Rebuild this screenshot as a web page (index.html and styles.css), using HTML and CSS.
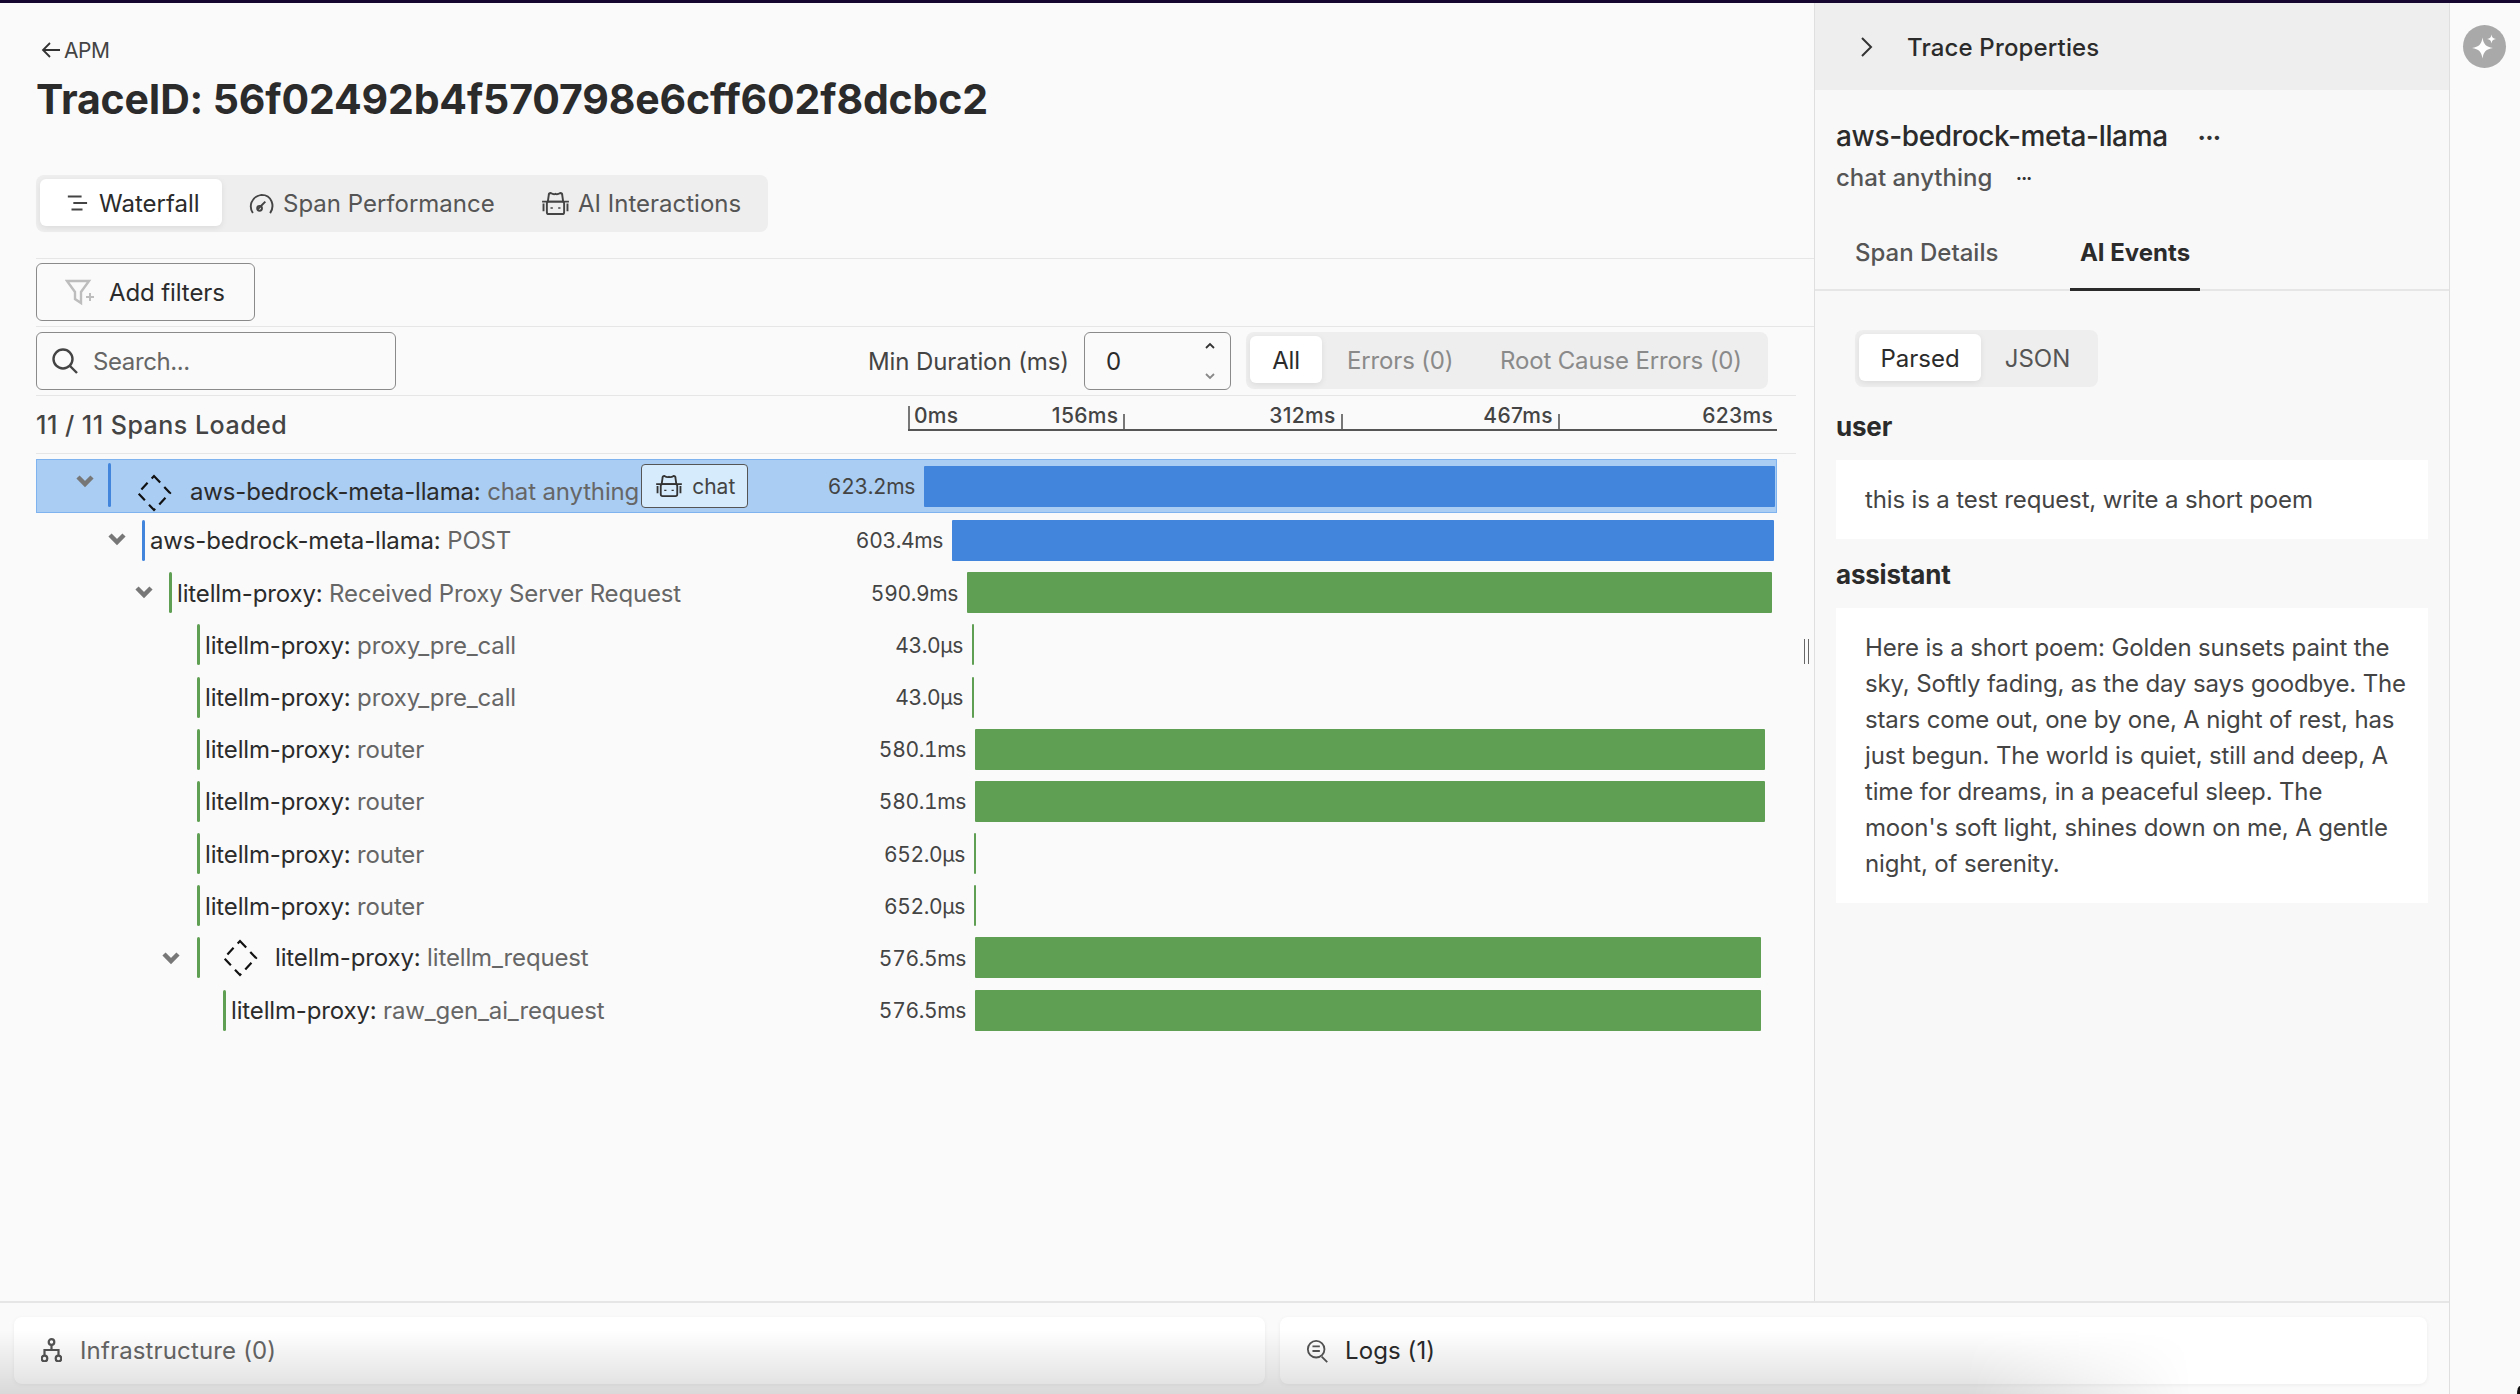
FILE: index.html
```html
<!DOCTYPE html>
<html lang="en">
<head>
<meta charset="utf-8">
<title>Trace</title>
<link rel="stylesheet" href="styles.css">
</head>
<body>
<div class="topbar"></div>
<div class="app">
  <div class="workspace">
    <div class="columns">
      <main class="main">
        <a class="crumb"><svg class="ic-back" viewBox="0 0 22 20"><path d="M20 10H3M10 3l-7 7 7 7"/></svg>APM</a>
        <h1 class="title">TraceID: 56f02492b4f570798e6cff602f8dcbc2</h1>
        <div class="seg seg-main">
          <div class="seg-item on"><svg class="ic" viewBox="0 0 24 24"><path d="M2 5h15M8 12h15M6 19h12"/></svg>Waterfall</div>
          <div class="seg-item"><svg class="ic" viewBox="0 0 28 24"><path d="M5 22C1 16 2 5 14 3c11 0 14 12 9 19M10 18l8-8"/><circle cx="12" cy="17" r="2.5"/></svg>Span Performance</div>
          <div class="seg-item"><svg class="ic" viewBox="0 0 30 24"><path d="M7 10l1-7q0-2 2-2 3 2 5 1 2 1 5-1 2 0 2 2l1 7M1 10h28"/><rect x="6" y="10" width="18" height="13" rx="2"/><path d="M2.500 12v8M27.500 12v8"/><path class="eye" d="M11 16v1.500M19 16v1.500"/></svg>AI Interactions</div>
        </div>
        <div class="bar-row">
          <button class="btn"><svg class="ic-filter" viewBox="0 0 30 28"><path d="M2 3h22l-8 11v11l-6-4v-7z"/><path class="plus" d="M25 15v8M21 19h8"/></svg>Add filters</button>
        </div>
        <div class="bar-row bar-search">
          <div class="search"><svg class="ic-search" viewBox="0 0 28 28"><circle cx="12" cy="12" r="9.5"/><path d="M19 19l7 7"/></svg>Search...</div>
          <span class="dur-label">Min Duration (ms)</span>
          <div class="num"><span>0</span><svg class="ic-spin" viewBox="0 0 12 40"><path class="up" d="M2 7l4-4 4 4"/><path class="down" d="M2 33l4 4 4-4"/></svg></div>
          <div class="seg seg-filter">
            <div class="seg-item on">All</div>
            <div class="seg-item">Errors (0)</div>
            <div class="seg-item">Root Cause Errors (0)</div>
          </div>
        </div>
        <div class="loaded-row">
          <span class="loaded">11 / 11 Spans Loaded</span>
          <div class="axis">
            <div class="tick first"><span class="zero">0ms</span><span>156ms</span></div>
            <div class="tick"><span>312ms</span></div>
            <div class="tick"><span>467ms</span></div>
            <div class="tick last"><span>623ms</span></div>
          </div>
        </div>
        <div class="rows">
          <div class="row selected">
            <svg class="chev" viewBox="0 0 18 12"><path d="M2 2l7 7 7-7"/></svg>
            <i class="edge blue e1"></i>
            <svg class="diamond" viewBox="0 0 36 38"><path d="M18 2L34 19 18 36 2 19z"/></svg>
            <span class="name name-root"><b>aws-bedrock-meta-llama:</b> chat anything</span>
            <span class="chip"><svg class="ic-chip" viewBox="0 0 30 24"><path d="M7 10l1-7q0-2 2-2 3 2 5 1 2 1 5-1 2 0 2 2l1 7M1 10h28"/><rect x="6" y="10" width="18" height="13" rx="2"/><path d="M2.500 12v8M27.500 12v8"/><path class="eye" d="M11 16v1.500M19 16v1.500"/></svg>chat</span>
            <span class="dur">623.2ms</span><i class="span-bar blue" style="width:851px;margin-right:1px"></i>
          </div>
          <div class="row d1">
            <svg class="chev" viewBox="0 0 18 12"><path d="M2 2l7 7 7-7"/></svg>
            <i class="edge blue"></i>
            <span class="name"><b>aws-bedrock-meta-llama:</b> POST</span>
            <span class="dur">603.4ms</span><i class="span-bar blue" style="width:822px;margin-right:3px"></i>
          </div>
          <div class="row d2">
            <svg class="chev" viewBox="0 0 18 12"><path d="M2 2l7 7 7-7"/></svg>
            <i class="edge green"></i>
            <span class="name"><b>litellm-proxy:</b> Received Proxy Server Request</span>
            <span class="dur">590.9ms</span><i class="span-bar green" style="width:805px;margin-right:5px"></i>
          </div>
          <div class="row d3">
            <i class="edge green"></i>
            <span class="name"><b>litellm-proxy:</b> proxy_pre_call</span>
            <span class="dur">43.0µs</span><i class="span-bar green" style="width:2px;margin-right:803px"></i>
          </div>
          <div class="row d3">
            <i class="edge green"></i>
            <span class="name"><b>litellm-proxy:</b> proxy_pre_call</span>
            <span class="dur">43.0µs</span><i class="span-bar green" style="width:2px;margin-right:803px"></i>
          </div>
          <div class="row d3">
            <i class="edge green"></i>
            <span class="name"><b>litellm-proxy:</b> router</span>
            <span class="dur">580.1ms</span><i class="span-bar green" style="width:790px;margin-right:12px"></i>
          </div>
          <div class="row d3">
            <i class="edge green"></i>
            <span class="name"><b>litellm-proxy:</b> router</span>
            <span class="dur">580.1ms</span><i class="span-bar green" style="width:790px;margin-right:12px"></i>
          </div>
          <div class="row d3">
            <i class="edge green"></i>
            <span class="name"><b>litellm-proxy:</b> router</span>
            <span class="dur">652.0µs</span><i class="span-bar green" style="width:2px;margin-right:801px"></i>
          </div>
          <div class="row d3">
            <i class="edge green"></i>
            <span class="name"><b>litellm-proxy:</b> router</span>
            <span class="dur">652.0µs</span><i class="span-bar green" style="width:2px;margin-right:801px"></i>
          </div>
          <div class="row d3 has-chev">
            <svg class="chev" viewBox="0 0 18 12"><path d="M2 2l7 7 7-7"/></svg>
            <i class="edge green"></i>
            <svg class="diamond small" viewBox="0 0 36 38"><path d="M18 2L34 19 18 36 2 19z"/></svg>
            <span class="name"><b>litellm-proxy:</b> litellm_request</span>
            <span class="dur">576.5ms</span><i class="span-bar green" style="width:786px;margin-right:16px"></i>
          </div>
          <div class="row d4">
            <i class="edge green"></i>
            <span class="name"><b>litellm-proxy:</b> raw_gen_ai_request</span>
            <span class="dur">576.5ms</span><i class="span-bar green" style="width:786px;margin-right:16px"></i>
          </div>
          <div class="grip"></div>
        </div>
      </main>
      <aside class="panel">
        <div class="panel-head"><svg class="ic-next" viewBox="0 0 14 22"><path d="M3 2l9 9-9 9"/></svg>Trace Properties</div>
        <div class="panel-title"><h2>aws-bedrock-meta-llama</h2><span class="dots">•••</span></div>
        <div class="panel-sub"><span>chat anything</span><span class="dots small">•••</span></div>
        <div class="panel-tabs">
          <div class="ptab">Span Details</div>
          <div class="ptab on">AI Events</div>
        </div>
        <div class="panel-body">
          <div class="seg seg-parse">
            <div class="seg-item on">Parsed</div>
            <div class="seg-item">JSON</div>
          </div>
          <h3>user</h3>
          <p class="msg">this is a test request, write a short poem</p>
          <h3>assistant</h3>
          <p class="msg">Here is a short poem: Golden sunsets paint the sky, Softly fading, as the day says goodbye. The stars come out, one by one, A night of rest, has just begun. The world is quiet, still and deep, A time for dreams, in a peaceful sleep. The moon's soft light, shines down on me, A gentle night, of serenity.</p>
        </div>
      </aside>
    </div>
    <footer class="dock">
      <div class="dock-card wide muted"><svg class="ic-dock infra" viewBox="0 0 21 24"><circle cx="10.500" cy="4" r="2.800"/><circle cx="3.500" cy="20.500" r="2.800"/><circle cx="17.500" cy="20.500" r="2.800"/><path d="M10.500 7v5M3.500 18v-6h14v6"/></svg>Infrastructure (0)</div>
      <div class="dock-card"><svg class="ic-dock" viewBox="0 0 26 28"><circle cx="11" cy="12" r="9"/><path d="M7 9h8M7 14h8M17 20l6 6"/></svg>Logs (1)</div>
    </footer>
  </div>
  <div class="rail">
    <div class="spark"><svg viewBox="0 0 43 43"><path d="M19.500 12.500c1.200 7 3.500 9.300 10.500 10.500-7 1.200-9.300 3.500-10.500 10.500-1.200-7-3.500-9.300-10.500-10.500 7-1.200 9.300-3.500 10.500-10.500z"/><path d="M28.500 9.500c.5 3 1.500 4 4.500 4.500-3 .5-4 1.500-4.500 4.500-.5-3-1.500-4-4.500-4.500 3-.5 4-1.500 4.500-4.500z"/></svg></div>
  </div>
</div>
<div class="fade"></div>
<div class="corner"></div>
</body>
</html>
```
FILE: styles.css
```css
* { box-sizing: border-box; }
html, body { margin: 0; height: 100%; }
body {
  font-family: Inter, "Noto Sans", sans-serif;
  color: #2b2b2b;
  background: #fafafa;
  overflow: hidden;
  font-size: 24px;
  position: relative;
}
.topbar { height: 3px; background: #14062e; }
.app { display: flex; height: 1391px; }
.workspace { width: 2450px; display: flex; flex-direction: column; border-right: 1px solid #dfdfdf; }
.columns { display: flex; height: 1298px; }
.main { width: 1814px; padding-left: 36px; }

.crumb { display: flex; align-items: center; height: 20px; margin-top: 37px; font-size: 21px; color: #444; letter-spacing: -0.4px; gap: 2px; }
.ic-back { width: 22px; height: 20px; fill: none; stroke: #333; stroke-width: 1.8; margin-left: 4px; }
.title { margin: 14px 0 0; height: 50px; line-height: 50px; font-size: 41px; font-weight: 700; color: #2b2b2b; letter-spacing: -0.15px; }

.seg { display: flex; background: #eeeeee; border-radius: 8px; padding: 4px 4px 6px; height: 57px; }
.seg-item { display: flex; align-items: center; font-size: 24px; color: #555; height: 47px; white-space: nowrap; padding-top: 1px; }
.seg-item.on { background: #fff; border-radius: 6px; color: #2b2b2b; box-shadow: 0 2px 6px rgba(0,0,0,.08); }
.seg-main { width: 732px; margin-top: 51px; margin-bottom: 26px; }
.seg-main .seg-item:nth-child(1) { width: 182px; padding-left: 26px; gap: 11px; }
.seg-main .seg-item:nth-child(2) { width: 267px; padding-left: 26px; gap: 8px; }
.seg-main .seg-item:nth-child(3) { padding-left: 52px; gap: 8px; }
.ic { width: 22px; height: 22px; fill: none; stroke: #444; stroke-width: 2.2; flex: none; }
.seg-main .seg-item:nth-child(2) .ic { width: 27px; height: 23px; stroke-width: 2; }
.seg-main .seg-item:nth-child(3) .ic { width: 29px; height: 23px; stroke-width: 2; }
.eye { stroke-width: 2.400; }

.bar-row { border-top: 1px solid #e6e6e6; padding: 4px 0 5px; height: 68px; display: flex; align-items: flex-start; }
.btn { width: 219px; height: 58px; border: 1px solid #8a8a8a; border-radius: 6px; background: #fafafa; font: inherit; color: #2b2b2b; display: flex; align-items: center; padding: 0 0 0 28px; gap: 14px; letter-spacing: -0.1px; }
.ic-filter { width: 30px; height: 28px; fill: none; stroke: #bdbdbd; stroke-width: 2.4; flex: none; }
.ic-filter .plus { stroke-width: 2; }
.bar-search { height: 69px; align-items: flex-start; padding-top: 5px; }
.search { width: 360px; height: 58px; border: 1px solid #8a8a8a; border-radius: 6px; display: flex; align-items: center; gap: 14px; padding-left: 14px; color: #666; letter-spacing: -0.4px; }
.ic-search { width: 28px; height: 28px; fill: none; stroke: #444; stroke-width: 2.4; flex: none; }
.dur-label { margin-left: 472px; width: 216px; height: 58px; line-height: 59px; color: #444; white-space: nowrap; letter-spacing: -0.1px; }
.num { width: 147px; height: 58px; border: 1px solid #8a8a8a; border-radius: 6px; display: flex; align-items: center; justify-content: space-between; padding: 0 14px 0 21px; color: #2b2b2b; }
.ic-spin { width: 12px; height: 40px; fill: none; stroke-width: 1.8; }
.ic-spin .up { stroke: #333; }
.ic-spin .down { stroke: #888; }
.seg-filter { width: 522px; margin-left: 15px; }
.seg-filter .seg-item { color: #8a8a8a; letter-spacing: -0.15px; }
.seg-filter .seg-item:nth-child(1) { width: 72px; justify-content: center; color: #2b2b2b; }
.seg-filter .seg-item:nth-child(2) { margin-left: 25px; width: 153px; }

.loaded-row { border-top: 1px solid #e6e6e6; margin-right: 18px; height: 59px; display: flex; justify-content: space-between; position: relative; border-bottom: 1px solid #e6e6e6; }
.loaded { line-height: 58px; font-weight: 500; color: #444; letter-spacing: 0.5px; white-space: nowrap; font-size: 25px; }
.axis { width: 869px; display: flex; height: 35px; border-bottom: 2px solid #555; position: absolute; left: 872px; top: 0; }
.tick { width: 217.300px; position: relative; display: flex; justify-content: flex-end; font-size: 21px; font-weight: 500; color: #444; line-height: 40px; padding-right: 7px; height: 33px; letter-spacing: 0.3px; }
.tick::after { content: ""; position: absolute; right: 0; bottom: 0; height: 15px; width: 2px; background: #777; }
.tick.last { padding-right: 4px; }
.tick.last::after { display: none; }
.tick.first { justify-content: space-between; padding-left: 6px; }
.tick.first::before { content: ""; position: absolute; left: 0; bottom: 0; height: 23px; width: 2px; background: #777; }

.rows { position: relative; margin-top: 5px; height: 800px; width: 1741px; }
.row { display: flex; align-items: center; height: 52.200px; position: relative; color: #666; white-space: nowrap; }
.row b { font-weight: 400; color: #2b2b2b; }
.row.selected { height: 54px; margin-bottom: 1.400px; background: #a9cdf3; border: 1px solid #7fb3f0; }
.chev { width: 18px; height: 12px; fill: none; stroke: #777; stroke-width: 4.500; flex: none; overflow: visible; }
.edge { width: 3px; height: 41px; border-radius: 2px; flex: none; margin-right: 5px; }
.e1 { margin-right: 0; height: 44px; margin-top: -2px; }
.blue { background: #4285dc; }
.green { background: #5f9f53; }
.selected .chev { margin: -10px 0 0 39px; }
.selected .edge { margin-left: 14px; }
.selected .diamond { margin: 14px 0 0 25px; }
.diamond { width: 36px; height: 38px; fill: none; stroke: #111; stroke-width: 2.200; stroke-dasharray: 9 6; flex: none; }
.diamond.small { margin: 0 0 0 17px; }
.name { letter-spacing: -0.15px; margin-top: 1px; }
.name-root { margin: 10px 0 0 18px; }
.d1 { padding-left: 72px; }
.d1 .chev { margin-top: -2px; margin-right: 16px; }
.d2 { padding-left: 99px; }
.d2 .chev { margin-top: -2px; margin-right: 16px; }
.d3 { padding-left: 161px; }
.d3.has-chev { padding-left: 126px; }
.d3.has-chev .chev { margin-right: 17px; }
.d3.has-chev .name { margin-left: 17px; margin-top: -1px; }
.d4 { padding-left: 187px; }
.chip { margin-left: 2px; width: 107px; height: 44px; background: #d6ebfb; border: 1px solid #555; border-radius: 4px; display: flex; align-items: center; gap: 9px; padding-left: 13px; font-size: 21px; color: #444; }
.ic-chip { width: 28px; height: 22px; fill: none; stroke: #333; stroke-width: 2; flex: none; }
.dur { margin-left: auto; font-size: 21px; color: #444; letter-spacing: -0.35px; margin-right: 9px; margin-top: 1px; font-variant-numeric: tabular-nums; }
.span-bar { height: 41px; flex: none; border-radius: 1px; }
.selected .span-bar { margin-top: 1px; }
.grip { position: absolute; left: 1768px; top: 180px; width: 5px; height: 25px; border-left: 1.500px solid #666; border-right: 1.500px solid #666; }

.panel { width: 635px; background: #f8f8f8; border-left: 1px solid #dfdfdf; }
.panel-head { height: 87px; background: #eeeeee; display: flex; align-items: center; font-weight: 500; gap: 34px; padding: 1px 0 0 44px; color: #2b2b2b; font-size: 24px; letter-spacing: 0.15px; }
.ic-next { width: 14px; height: 22px; fill: none; stroke: #333; stroke-width: 2; flex: none; }
.panel-title { display: flex; align-items: center; height: 40px; margin-top: 26px; padding-left: 21px; }
.panel-title h2 { margin: 0; font-size: 28px; font-weight: 500; letter-spacing: -0.35px; color: #2b2b2b; }
.dots { margin-left: 30px; font-size: 14px; letter-spacing: -0.2px; color: #333; }
.dots.small { margin-left: 24px; font-size: 10px; }
.panel-sub { display: flex; align-items: center; height: 32px; margin-top: 5px; padding-left: 21px; font-weight: 500; color: #555; letter-spacing: 0; }
.panel-tabs { display: flex; height: 75px; margin-top: 23px; padding-left: 40px; border-bottom: 2px solid #e6e6e6; }
.ptab { height: 75px; line-height: 73px; font-weight: 500; color: #555; letter-spacing: 0; width: 215px; }
.ptab.on { width: 130px; text-align: center; font-weight: 700; color: #2b2b2b; border-bottom: 3px solid #2b2b2b; }
.panel-body { padding: 39px 21px 0; }
.seg-parse { width: 243px; margin-left: 19px; margin-bottom: 20px; }
.seg-parse .seg-item { justify-content: center; }
.seg-parse .seg-item:nth-child(1) { width: 122px; }
.seg-parse .seg-item:nth-child(2) { width: 113px; }
h3 { margin: 0; height: 40px; line-height: 40px; font-size: 26px; font-weight: 700; color: #2b2b2b; letter-spacing: -0.2px; }
.msg { margin: 13px 0 0; background: #fff; padding: 22px 18px 21px 29px; line-height: 36px; color: #444; font-size: 24px; letter-spacing: -0.15px; }
h3 + .msg + h3 { margin-top: 16px; }

.dock { flex: 1; border-top: 2px solid #e6e6e6; display: flex; gap: 15px; padding: 14px 22px 0 14px; }
.dock-card { height: 67px; background: #fff; border-radius: 8px; display: flex; align-items: center; gap: 15px; padding-left: 26px; flex: 1; color: #2b2b2b; box-shadow: 0 1px 4px rgba(0,0,0,.06); letter-spacing: 0.1px; }
.dock-card.wide { flex: none; width: 1251px; padding-left: 27px; gap: 18px; letter-spacing: 0.15px; }
.muted { color: #666; }
.ic-dock { width: 24px; height: 28px; fill: none; stroke: #555; stroke-width: 2; flex: none; }
.ic-dock.infra { width: 21px; height: 24px; stroke-width: 2.200; margin-top: -2px; }
.rail { flex: 1; padding: 22px 0 0 13px; }
.spark { width: 43px; height: 43px; border-radius: 50%; background: #a9a9a9; }
.spark svg { display: block; width: 43px; height: 43px; fill: #fff; }
.fade { position: absolute; left: 0; right: 0; bottom: 0; height: 64px; pointer-events: none; background: linear-gradient(to bottom, rgba(0,0,0,0), rgba(0,0,0,.13)); -webkit-mask-image: linear-gradient(to right, #000 78%, transparent 87%); mask-image: linear-gradient(to right, #000 78%, transparent 87%); }
.corner { position: absolute; right: 0; bottom: 0; width: 3px; height: 8px; background: #111; border-top-left-radius: 3px 8px; }
```
